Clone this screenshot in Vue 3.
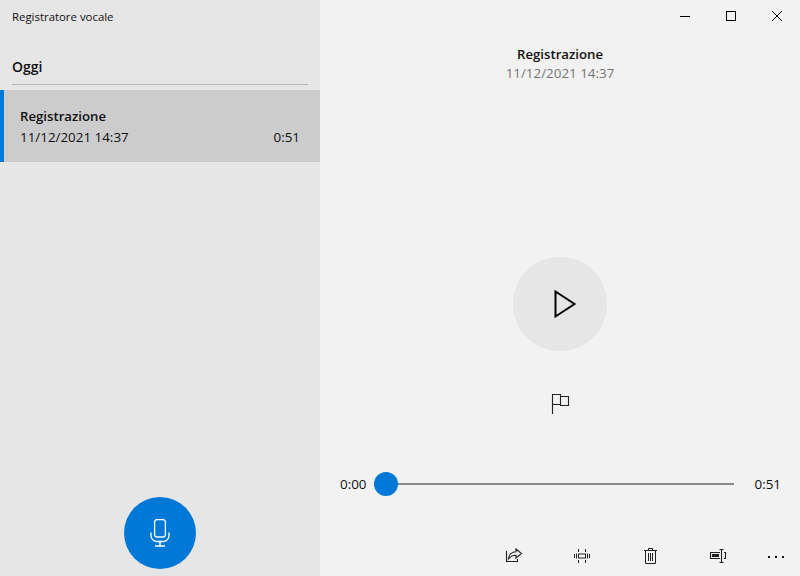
<template>
  <div class="app">
    <aside class="side">
      <div class="app-title">Registratore vocale</div>
      <div class="group">Oggi</div>
      <div class="item">
        <div class="item-name">Registrazione</div>
        <div class="item-meta">
          <span>11/12/2021 14:37</span>
          <span>0:51</span>
        </div>
      </div>
      <div class="rec-wrap">
        <button class="rec">
          <svg width="20" height="28" viewBox="0 0 20 28" fill="none" stroke="#fff" stroke-width="1.300">
            <rect x="4.600" y="0.600" width="10.800" height="17.400" rx="2.500" />
            <path d="M1 13.500v3a6 6 0 0 0 6 6h6a6 6 0 0 0 6-6v-3" />
            <path d="M10 22.500v4.500M5 27h10" stroke-width="1.500" />
          </svg>
        </button>
      </div>
    </aside>

    <main class="main">
      <div class="winbar">
        <span class="winbtn">
          <svg width="10" height="10" viewBox="0 0 10 10" stroke="#000" fill="none"><path d="M0 5.500h10" /></svg>
        </span>
        <span class="winbtn">
          <svg width="10" height="10" viewBox="0 0 10 10" stroke="#000" fill="none"><rect x="0.500" y="0.500" width="9" height="9" /></svg>
        </span>
        <span class="winbtn">
          <svg width="10" height="10" viewBox="0 0 10 10" stroke="#000" fill="none"><path d="M0 0l10 10M10 0L0 10" /></svg>
        </span>
      </div>

      <div class="head">
        <div class="head-name">Registrazione</div>
        <div class="head-date">11/12/2021 14:37</div>
      </div>

      <button class="play">
        <svg width="24" height="30" viewBox="0 0 24 30" fill="none" stroke="#000" stroke-width="2">
          <path d="M2.500 2.500v25L21.500 15z" />
        </svg>
      </button>

      <div class="flag">
        <svg width="20" height="22" viewBox="0 0 20 22" fill="none" stroke="#222" stroke-width="1.100">
          <path d="M2.500 21V1.500h8v10h-8" />
          <path d="M10.500 3.500h8v9h-8v-1" />
        </svg>
      </div>

      <div class="slider">
        <span class="time">0:00</span>
        <span class="thumb"></span>
        <span class="track"></span>
        <span class="time end">0:51</span>
      </div>

      <div class="tools">
        <button class="tool">
          <svg width="18" height="16" viewBox="0 0 18 16" fill="none" stroke="#222" stroke-width="1.100">
            <path d="M1.500 3v10.500h11V11" />
            <path d="M11 1l5.500 4.500L11 10V7.300c-3 0-5.500 1-7.500 3.700C3.800 6.500 7 3.800 11 3.700z" />
          </svg>
        </button>
        <button class="tool">
          <svg width="18" height="14" viewBox="0 0 18 14" fill="none" stroke="#222">
            <rect x="5.500" y="5" width="7" height="4" />
            <path d="M1.500 5v4M3.500 4.500v5M14.500 4.500v5M16.500 5v4M5.500 0v3M5.500 11v3M12.500 0v3M12.500 11v3" />
          </svg>
        </button>
        <button class="tool">
          <svg width="13" height="16" viewBox="0 0 13 16" fill="none" stroke="#222">
            <path d="M0 2.500h13M4.500 2.500v-2h4v2M1.500 2.500v13h10v-13" />
            <path d="M4.500 5v8M6.500 5v8M8.500 5v8" />
          </svg>
        </button>
        <button class="tool">
          <svg width="18" height="14" viewBox="0 0 18 14" fill="none" stroke="#222" stroke-width="1.100">
            <path d="M11 3.500H1.500v6H11" />
            <rect x="3.500" y="5.500" width="6" height="2" fill="#222" />
            <path d="M12.500 0.500v13M10.500 0.500h4M10.500 13.500h4M15 3.500h1.500v6H15" />
          </svg>
        </button>
        <button class="tool more">
          <span></span><span></span><span></span>
        </button>
      </div>
    </main>
  </div>
</template>

<script setup>
</script>

<style>
html, body { margin: 0; height: 100%; overflow: hidden; }
</style>

<style scoped>
.app { display: flex; width: 800px; height: 576px; font-family: "Open Sans", "Noto Sans", sans-serif; color: #111; font-size: 13.400px; }
button { border: 0; padding: 0; background: none; display: flex; align-items: center; justify-content: center; }

.side { width: 320px; background: #e6e6e6; display: flex; flex-direction: column; }
.app-title { height: 32px; line-height: 34px; padding-left: 12px; font-size: 11.400px; }
.group { margin: 0 12px; height: 53px; box-sizing: border-box; padding-top: 23px; line-height: 24px; border-bottom: 1px solid #b8b8b8; font-weight: 600; font-size: 14px; }
.item { margin-top: 5px; height: 72px; box-sizing: border-box; padding: 15px 20px 0 16px; background: #cccccc; border-left: 4px solid #0078d7; }
.item-name { font-weight: 600; line-height: 22px; font-size: 13.200px; }
.item-meta { display: flex; justify-content: space-between; line-height: 21px; }
.rec-wrap { margin-top: auto; padding-bottom: 7px; display: flex; justify-content: center; }
.rec { width: 72px; height: 72px; border-radius: 50%; background: #0078d7; }

.main { flex: 1; background: #f2f2f2; display: flex; flex-direction: column; align-items: center; }
.winbar { align-self: stretch; height: 32px; display: flex; justify-content: flex-end; }
.winbtn { width: 46px; height: 32px; display: flex; align-items: center; justify-content: center; }
.head { margin-top: 12px; text-align: center; }
.head-name { font-weight: 600; line-height: 20px; font-size: 13.200px; }
.head-date { color: #767676; line-height: 18px; }
.play { margin-top: 175px; width: 94px; height: 94px; padding-left: 9px; border-radius: 50%; background: #e6e6e6; }
.flag { margin-top: 42px; height: 22px; display: flex; }
.slider { margin-top: 57px; align-self: stretch; height: 24px; padding: 0 20px; display: flex; align-items: center; }
.time { width: 34px; line-height: 24px; }
.time.end { width: 47px; margin-right: -1px; text-align: right; }
.thumb { width: 24px; height: 24px; border-radius: 50%; background: #0078d7; flex: none; }
.track { flex: 1; height: 2px; background: #8a8a8a; }
.tools { margin-top: auto; align-self: stretch; height: 40px; display: flex; justify-content: flex-end; }
.tool { width: 68px; height: 40px; }
.tool.more { width: 48px; gap: 5px; padding-top: 2px; }
.more span { width: 2px; height: 2px; background: #111; }
</style>
